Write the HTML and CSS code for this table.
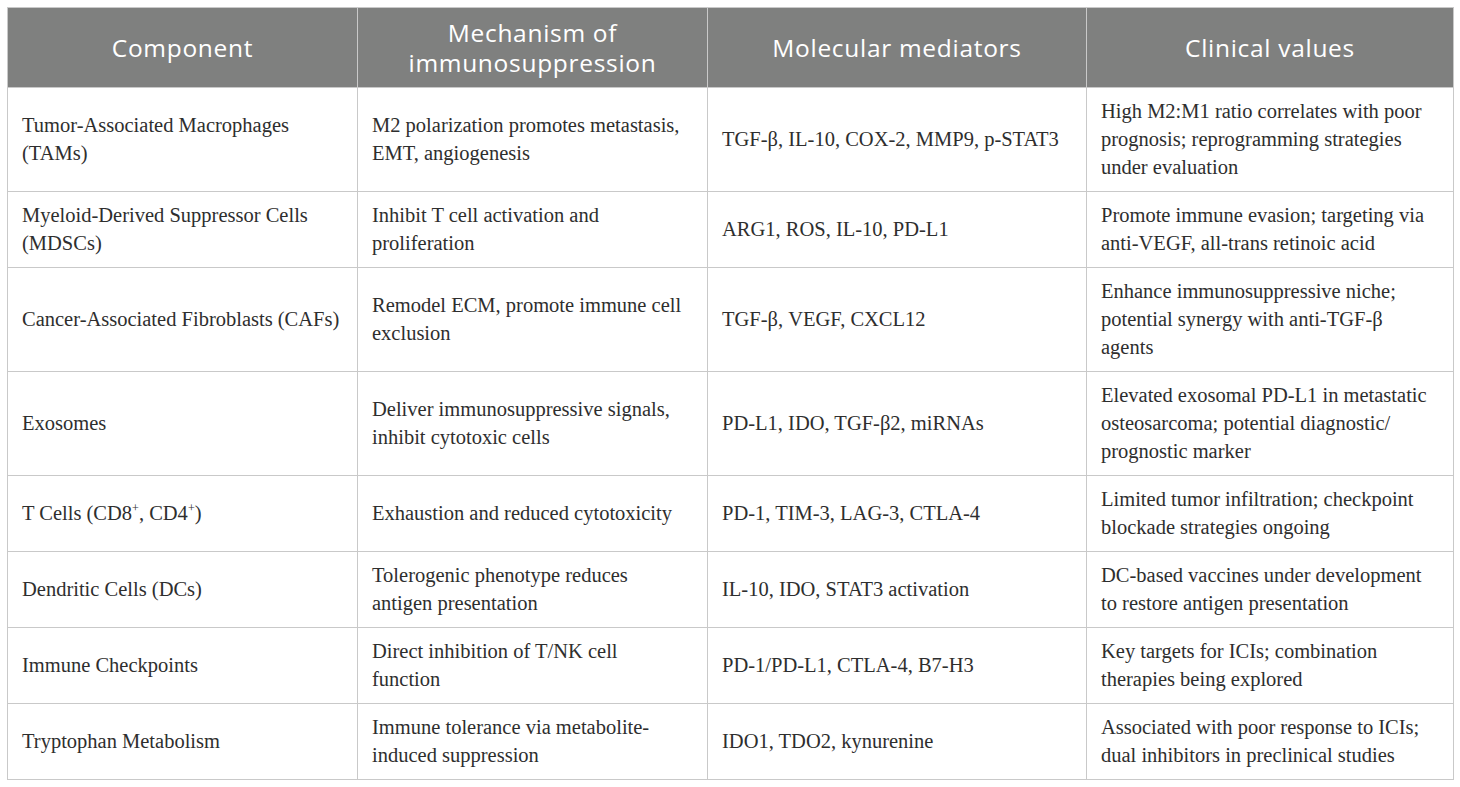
FILE: index.html
```html
<!DOCTYPE html>
<html lang="en">
<head>
<meta charset="utf-8">
<title>Tumor microenvironment components</title>
<link rel="stylesheet" href="styles.css">
</head>
<body>
<table class="tme">
  <colgroup>
    <col class="c1"><col class="c2"><col class="c3"><col class="c4">
  </colgroup>
  <thead>
    <tr>
      <th>Component</th>
      <th>Mechanism of<br>immunosuppression</th>
      <th>Molecular mediators</th>
      <th>Clinical values</th>
    </tr>
  </thead>
  <tbody>
    <tr>
      <td>Tumor-Associated Macrophages<br>(TAMs)</td>
      <td>M2 polarization promotes metastasis,<br>EMT, angiogenesis</td>
      <td>TGF-β, IL-10, COX-2, MMP9, p-STAT3</td>
      <td>High M2:M1 ratio correlates with poor<br>prognosis; reprogramming strategies<br>under evaluation</td>
    </tr>
    <tr>
      <td>Myeloid-Derived Suppressor Cells<br>(MDSCs)</td>
      <td>Inhibit T cell activation and<br>proliferation</td>
      <td>ARG1, ROS, IL-10, PD-L1</td>
      <td>Promote immune evasion; targeting via<br>anti-VEGF, all-trans retinoic acid</td>
    </tr>
    <tr>
      <td>Cancer-Associated Fibroblasts (CAFs)</td>
      <td>Remodel ECM, promote immune cell<br>exclusion</td>
      <td>TGF-β, VEGF, CXCL12</td>
      <td>Enhance immunosuppressive niche;<br>potential synergy with anti-TGF-β<br>agents</td>
    </tr>
    <tr>
      <td>Exosomes</td>
      <td>Deliver immunosuppressive signals,<br>inhibit cytotoxic cells</td>
      <td>PD-L1, IDO, TGF-β2, miRNAs</td>
      <td>Elevated exosomal PD-L1 in metastatic<br>osteosarcoma; potential diagnostic/<br>prognostic marker</td>
    </tr>
    <tr>
      <td>T Cells (CD8<sup>+</sup>, CD4<sup>+</sup>)</td>
      <td>Exhaustion and reduced cytotoxicity</td>
      <td>PD-1, TIM-3, LAG-3, CTLA-4</td>
      <td>Limited tumor infiltration; checkpoint<br>blockade strategies ongoing</td>
    </tr>
    <tr>
      <td>Dendritic Cells (DCs)</td>
      <td>Tolerogenic phenotype reduces<br>antigen presentation</td>
      <td>IL-10, IDO, STAT3 activation</td>
      <td>DC-based vaccines under development<br>to restore antigen presentation</td>
    </tr>
    <tr>
      <td>Immune Checkpoints</td>
      <td>Direct inhibition of T/NK cell<br>function</td>
      <td>PD-1/PD-L1, CTLA-4, B7-H3</td>
      <td>Key targets for ICIs; combination<br>therapies being explored</td>
    </tr>
    <tr>
      <td>Tryptophan Metabolism</td>
      <td>Immune tolerance via metabolite-<br>induced suppression</td>
      <td>IDO1, TDO2, kynurenine</td>
      <td>Associated with poor response to ICIs;<br>dual inhibitors in preclinical studies</td>
    </tr>
  </tbody>
</table>
</body>
</html>
```
FILE: styles.css
```css
html, body {
  margin: 0;
  padding: 0;
  background: #ffffff;
}

body {
  padding: 7px 0 0 7px;
}

.tme {
  border-collapse: collapse;
  table-layout: fixed;
  width: 1446px;
  font-family: "Liberation Serif", "Times New Roman", serif;
  font-size: 20.5px;
  color: #2e2e2e;
}

.c1 { width: 350px; }
.c2 { width: 350px; }
.c3 { width: 379px; }
.c4 { width: 367px; }

.tme th,
.tme td {
  border: 1px solid #c9c9c9;
  vertical-align: middle;
}

.tme th {
  background: #7f807f;
  color: #ffffff;
  font-family: "Open Sans", "Lato", sans-serif;
  font-weight: 400;
  font-size: 24.5px;
  letter-spacing: 0.7px;
  line-height: 30px;
  height: 80px;
  padding: 0 10px;
  text-align: center;
  box-sizing: border-box;
}

.tme td {
  line-height: 28px;
  padding: 9px 14px 10px 14px;
  text-align: left;
  white-space: nowrap;
}

.tme sup {
  font-size: 12px;
  line-height: 0;
  vertical-align: 8px;
}
```
